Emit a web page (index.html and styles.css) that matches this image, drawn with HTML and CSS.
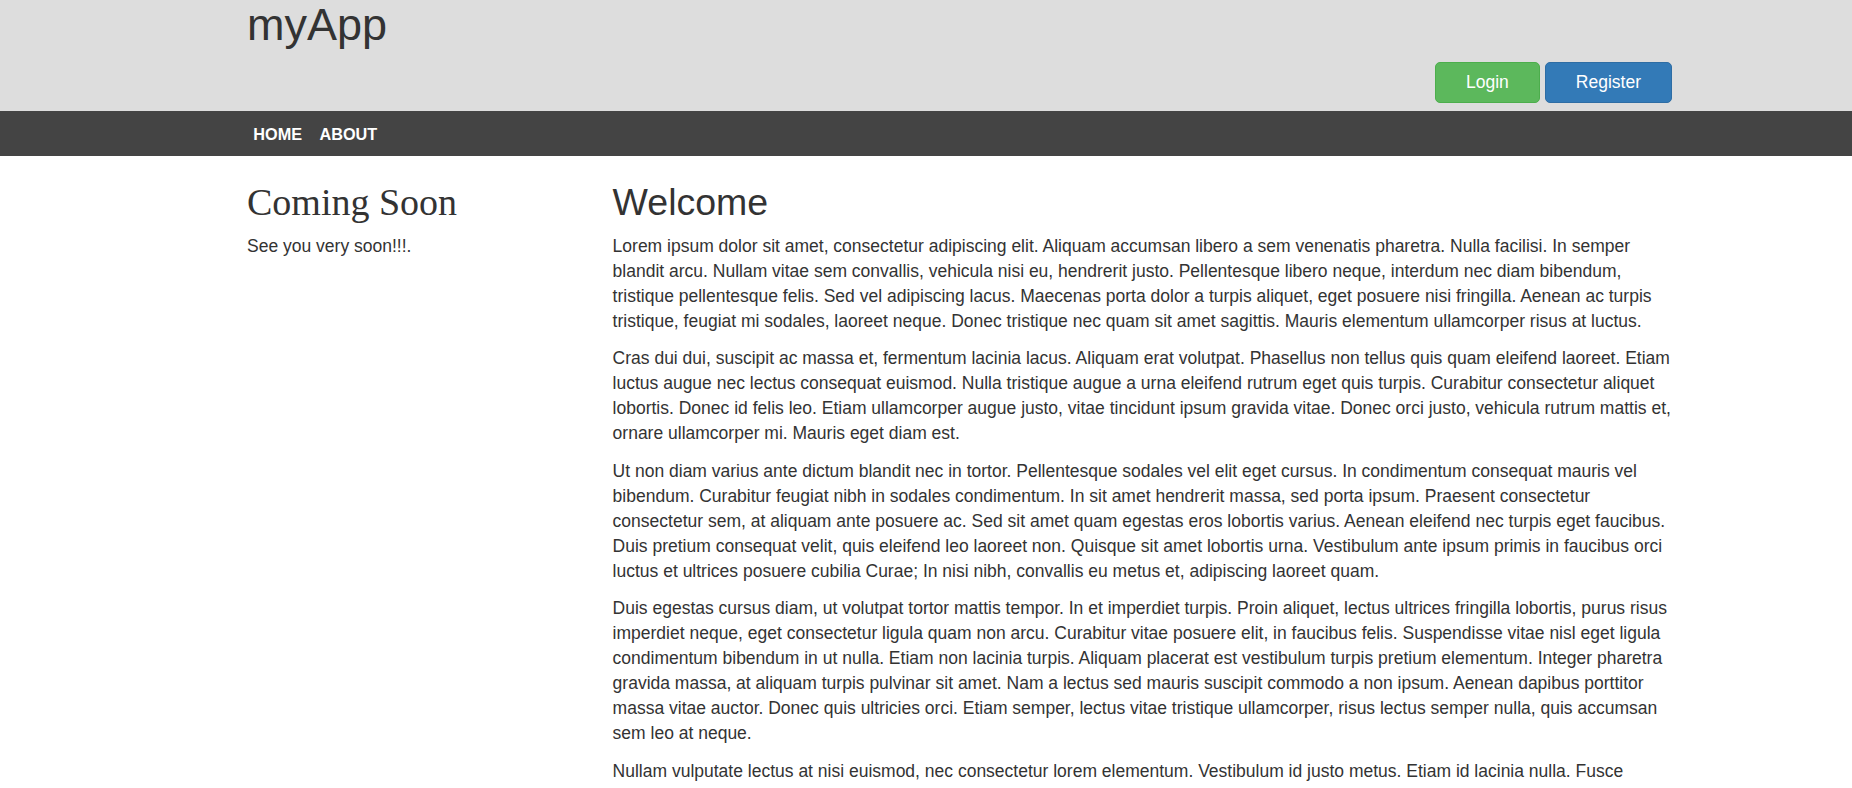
FILE: index.html
```html
<!DOCTYPE html>
<html lang="en">
<head>
<meta charset="utf-8">
<title>myApp</title>
<link rel="stylesheet" href="styles.css">
</head>
<body>
<header class="site-header">
  <div class="container header-inner">
    <h1 class="brand">myApp</h1>
    <div class="auth-buttons">
      <a class="btn btn-success" href="#">Login</a>
      <a class="btn btn-primary" href="#">Register</a>
    </div>
  </div>
</header>
<nav class="main-nav">
  <div class="container nav-inner">
    <a class="nav-link" href="#">HOME</a>
    <a class="nav-link" href="#">ABOUT</a>
  </div>
</nav>
<main class="container content">
  <aside class="sidebar">
    <h2 class="sidebar-title">Coming Soon</h2>
    <p>See you very soon!!!.</p>
  </aside>
  <section class="main-col">
    <h2 class="page-title">Welcome</h2>
    <p>Lorem ipsum dolor sit amet, consectetur adipiscing elit. Aliquam accumsan libero a sem venenatis pharetra. Nulla facilisi. In semper blandit arcu. Nullam vitae sem convallis, vehicula nisi eu, hendrerit justo. Pellentesque libero neque, interdum nec diam bibendum, tristique pellentesque felis. Sed vel adipiscing lacus. Maecenas porta dolor a turpis aliquet, eget posuere nisi fringilla. Aenean ac turpis tristique, feugiat mi sodales, laoreet neque. Donec tristique nec quam sit amet sagittis. Mauris elementum ullamcorper risus at luctus.</p>
    <p>Cras dui dui, suscipit ac massa et, fermentum lacinia lacus. Aliquam erat volutpat. Phasellus non tellus quis quam eleifend laoreet. Etiam luctus augue nec lectus consequat euismod. Nulla tristique augue a urna eleifend rutrum eget quis turpis. Curabitur consectetur aliquet lobortis. Donec id felis leo. Etiam ullamcorper augue justo, vitae tincidunt ipsum gravida vitae. Donec orci justo, vehicula rutrum mattis et, ornare ullamcorper mi. Mauris eget diam est.</p>
    <p>Ut non diam varius ante dictum blandit nec in tortor. Pellentesque sodales vel elit eget cursus. In condimentum consequat mauris vel bibendum. Curabitur feugiat nibh in sodales condimentum. In sit amet hendrerit massa, sed porta ipsum. Praesent consectetur consectetur sem, at aliquam ante posuere ac. Sed sit amet quam egestas eros lobortis varius. Aenean eleifend nec turpis eget faucibus. Duis pretium consequat velit, quis eleifend leo laoreet non. Quisque sit amet lobortis urna. Vestibulum ante ipsum primis in faucibus orci luctus et ultrices posuere cubilia Curae; In nisi nibh, convallis eu metus et, adipiscing laoreet quam.</p>
    <p>Duis egestas cursus diam, ut volutpat tortor mattis tempor. In et imperdiet turpis. Proin aliquet, lectus ultrices fringilla lobortis, purus risus imperdiet neque, eget consectetur ligula quam non arcu. Curabitur vitae posuere elit, in faucibus felis. Suspendisse vitae nisl eget ligula condimentum bibendum in ut nulla. Etiam non lacinia turpis. Aliquam placerat est vestibulum turpis pretium elementum. Integer pharetra gravida massa, at aliquam turpis pulvinar sit amet. Nam a lectus sed mauris suscipit commodo a non ipsum. Aenean dapibus porttitor massa vitae auctor. Donec quis ultricies orci. Etiam semper, lectus vitae tristique ullamcorper, risus lectus semper nulla, quis accumsan sem leo at neque.</p>
    <p>Nullam vulputate lectus at nisi euismod, nec consectetur lorem elementum. Vestibulum id justo metus. Etiam id lacinia nulla. Fusce dignissim lacus nec lorem sagittis tincidunt. Sed at arcu ut nisi volutpat semper. Integer ac diam ac sem suscipit consequat vel non magna.</p>
  </section>
</main>
</body>
</html>
```
FILE: styles.css
```css
* {
  box-sizing: border-box;
}

html, body {
  margin: 0;
  padding: 0;
}

body {
  font-family: "Liberation Sans", Arial, Helvetica, sans-serif;
  font-size: 17.5px;
  line-height: 25px;
  color: #333333;
  background: #ffffff;
}

.container {
  width: 1425px;
  margin-left: 247px;
}

/* Header */
.site-header {
  background: #dddddd;
  height: 111px;
}

.header-inner {
  display: flex;
  flex-direction: column;
}

.brand {
  margin: 0;
  font-size: 45px;
  line-height: 49.5px;
  font-weight: 400;
  color: #333333;
}

.auth-buttons {
  display: flex;
  justify-content: flex-end;
  gap: 5px;
  margin-top: 12px;
}

.btn {
  display: inline-block;
  height: 41.5px;
  padding: 7.5px 30px;
  font-size: 17.5px;
  line-height: 25px;
  color: #ffffff;
  text-decoration: none;
  border: 1px solid transparent;
  border-radius: 5px;
}

.btn-success {
  background: #5cb85c;
  border-color: #4cae4c;
}

.btn-primary {
  background: #337ab7;
  border-color: #2e6da4;
}

/* Nav */
.main-nav {
  background: #444444;
  height: 45px;
}

.nav-inner {
  display: flex;
  align-items: center;
  height: 45px;
  gap: 5px;
}

.nav-link {
  padding: 0 6.25px;
  font-size: 16.25px;
  font-weight: 700;
  color: #ffffff;
  text-decoration: none;
  line-height: 20px;
}

/* Content */
.content {
  display: grid;
  grid-template-columns: 328px 1fr;
  column-gap: 37.6px;
  padding-top: 26px;
}

.content p {
  margin: 0 0 12.5px;
}

.sidebar-title {
  margin: 0 0 10.5px;
  font-family: "Liberation Serif", "Times New Roman", serif;
  font-size: 38px;
  line-height: 41.25px;
  font-weight: 400;
  color: #333333;
}

.page-title {
  margin: 0 0 10.5px;
  font-size: 37.5px;
  line-height: 41.25px;
  font-weight: 400;
  color: #333333;
}
```
